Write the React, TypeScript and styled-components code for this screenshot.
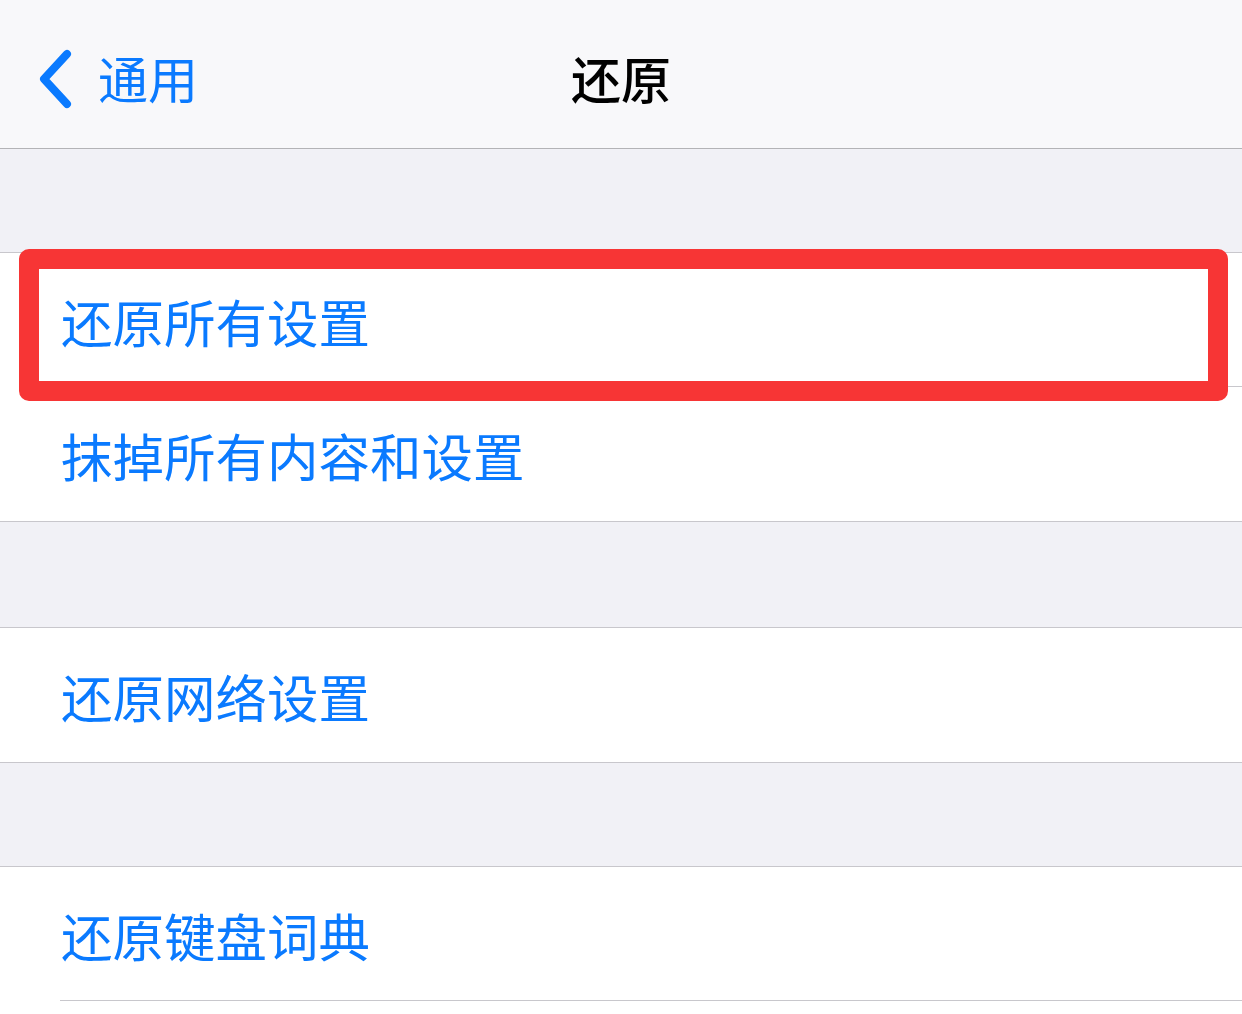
import React from "react";
import styled, { createGlobalStyle } from "styled-components";

const Global = createGlobalStyle`
  html, body { margin: 0; padding: 0; background: #f1f1f6; }
  body { font-family: "Noto Sans CJK SC", "Noto Sans", sans-serif; }
`;

const Page = styled.div`
  width: 1242px;
  height: 1014px;
  overflow: hidden;
  background: #f1f1f6;
  display: flex;
  flex-direction: column;
`;

const NavBar = styled.div`
  height: 149px;
  flex: none;
  background: #f8f8fa;
  border-bottom: 1px solid #b3b3b6;
  display: grid;
  grid-template-columns: 1fr auto 1fr;
  align-items: center;
  box-sizing: border-box;
  padding-top: 12px;
`;

const Back = styled.div`
  display: flex;
  align-items: center;
  gap: 22px;
  padding-left: 36px;
  color: #0a7aff;
  font-size: 50px;
  line-height: 1;
`;

const BackLabel = styled.span`
  position: relative;
  top: -3px;
`;

const Title = styled.div`
  font-size: 50px;
  font-weight: 500;
  color: #000;
  line-height: 1;
  position: relative;
  top: -3px;
`;

const Gap = styled.div<{ $h: number }>`
  height: ${(p) => p.$h}px;
  flex: none;
`;

const Group = styled.div`
  background: #fff;
  border-top: 1px solid #c8c7cc;
  border-bottom: 1px solid #c8c7cc;
  display: flex;
  flex-direction: column;
`;

const Row = styled.div<{ $sep?: boolean }>`
  position: relative;
  height: 134px;
  display: flex;
  align-items: center;
  padding-left: 61px;
  color: #0a7aff;
  font-size: 51.5px;
  line-height: 1;
  &::after {
    content: "";
    display: ${(p) => (p.$sep ? "block" : "none")};
    position: absolute;
    left: 60px;
    right: 0;
    bottom: 0;
    height: 1px;
    background: #c8c7cc;
  }
`;

const Highlight = styled.div`
  position: absolute;
  left: 19px;
  top: -4px;
  width: 1209px;
  height: 152px;
  box-sizing: border-box;
  border: 20px solid #f73535;
  border-radius: 10px;
  pointer-events: none;
  z-index: 2;
`;

const Label = styled.span`
  position: relative;
  top: 1px;
`;

const LastGroup = styled.div`
  background: #fff;
  border-top: 1px solid #c8c7cc;
  flex: 1;
`;

export default function App() {
  return (
    <Page>
      <Global />
      <NavBar>
        <Back>
          <svg width="40" height="62" viewBox="0 0 40 62">
            <path
              d="M31 5 L8 30 L31 55"
              fill="none"
              stroke="#0a7aff"
              strokeWidth="8"
              strokeLinecap="round"
              strokeLinejoin="round"
            />
          </svg>
          <BackLabel>通用</BackLabel>
        </Back>
        <Title>还原</Title>
        <div />
      </NavBar>
      <Gap $h={103} />
      <Group>
        <Row $sep>
          <Highlight />
          <Label>还原所有设置</Label>
        </Row>
        <Row>
          <Label>抹掉所有内容和设置</Label>
        </Row>
      </Group>
      <Gap $h={105} />
      <Group>
        <Row>
          <Label>还原网络设置</Label>
        </Row>
      </Group>
      <Gap $h={103} />
      <LastGroup>
        <Row $sep>
          <Label>还原键盘词典</Label>
        </Row>
      </LastGroup>
    </Page>
  );
}
